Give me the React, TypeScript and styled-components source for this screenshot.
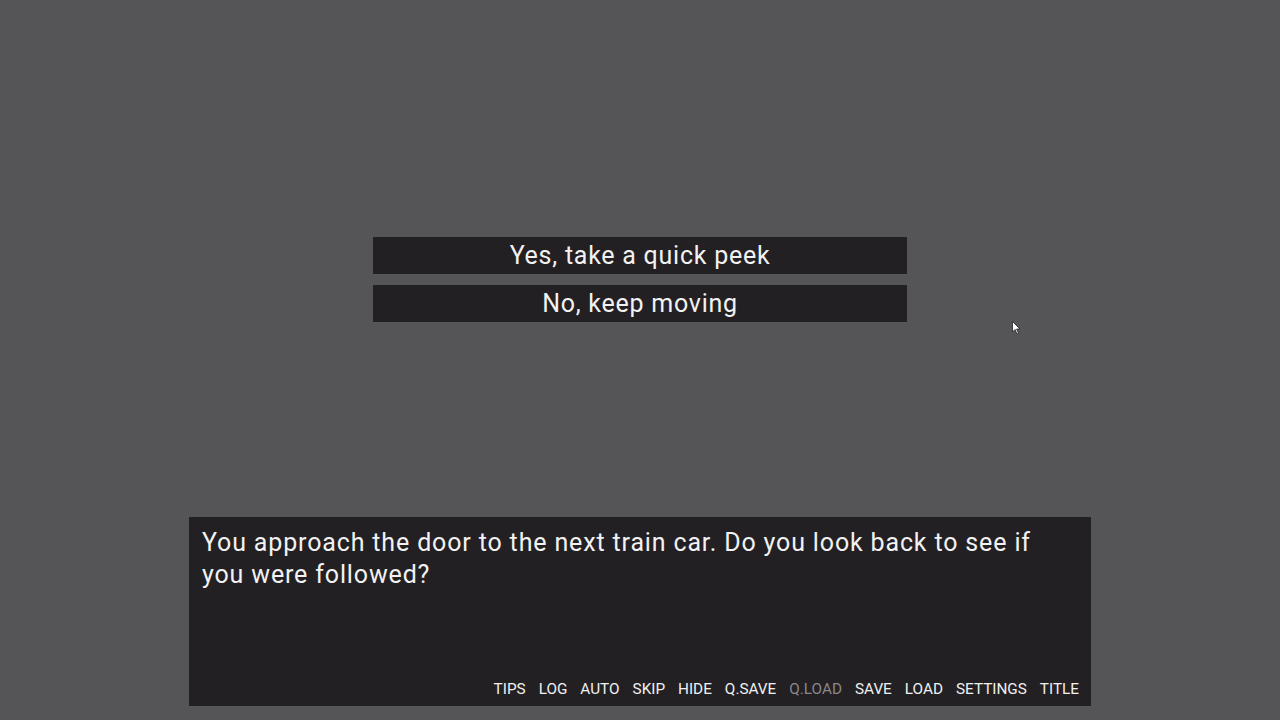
import React from "react";
import styled, { createGlobalStyle } from "styled-components";

const Global = createGlobalStyle`
  html, body { margin: 0; padding: 0; background: #555457; }
  body { font-family: Roboto, "Liberation Sans", sans-serif; }
`;

const Stage = styled.div`
  position: relative;
  width: 1280px;
  height: 720px;
  background: #555457;
  display: flex;
  flex-direction: column;
  align-items: center;
  padding-top: 237px;
  box-sizing: border-box;
  overflow: hidden;
`;

const ChoiceList = styled.div`
  display: flex;
  flex-direction: column;
  gap: 11px;
  width: 534px;
`;

const Choice = styled.button`
  height: 37px;
  border: none;
  background: #232024;
  color: #f2f2f2;
  font-family: Roboto, "Liberation Sans", sans-serif;
  font-size: 25px;
  letter-spacing: 0.75px;
  line-height: 37px;
  padding: 0 0 1px;
  text-align: center;
  cursor: pointer;
`;

const DialogBox = styled.div`
  margin-top: 195px;
  width: 902px;
  height: 189px;
  background: #232024;
  box-sizing: border-box;
  padding: 10px 12px 8px 13px;
  display: flex;
  flex-direction: column;
`;

const Say = styled.p`
  margin: 0;
  color: #f2f2f2;
  font-size: 25px;
  letter-spacing: 0.85px;
  line-height: 32px;
  width: 850px;
`;

const QuickMenu = styled.nav`
  margin-top: auto;
  display: flex;
  justify-content: flex-end;
  gap: 13px;
`;

const QuickItem = styled.span<{ $disabled?: boolean }>`
  color: ${(p) => (p.$disabled ? "#8a878b" : "#f0f0f0")};
  font-size: 15.3px;
  line-height: 18px;
`;

const Cursor = styled.svg`
  position: absolute;
  left: 1012px;
  top: 321px;
`;

const items = ["TIPS", "LOG", "AUTO", "SKIP", "HIDE", "Q.SAVE", "Q.LOAD", "SAVE", "LOAD", "SETTINGS", "TITLE"];

export default function App() {
  return (
    <>
      <Global />
      <Stage>
        <ChoiceList>
          <Choice>Yes, take a quick peek</Choice>
          <Choice>No, keep moving</Choice>
        </ChoiceList>
        <DialogBox>
          <Say>You approach the door to the next train car. Do you look back to see if you were followed?</Say>
          <QuickMenu>
            {items.map((i) => (
              <QuickItem key={i} $disabled={i === "Q.LOAD"}>{i}</QuickItem>
            ))}
          </QuickMenu>
        </DialogBox>
        <Cursor width="9" height="14" viewBox="0 0 9 14">
          <path d="M0.5 0.5 L0.5 11 L3 8.5 L5 13 L6.5 12.3 L4.6 8 L8 8 Z" fill="#ffffff" stroke="#222" strokeWidth="0.8" />
        </Cursor>
      </Stage>
    </>
  );
}
